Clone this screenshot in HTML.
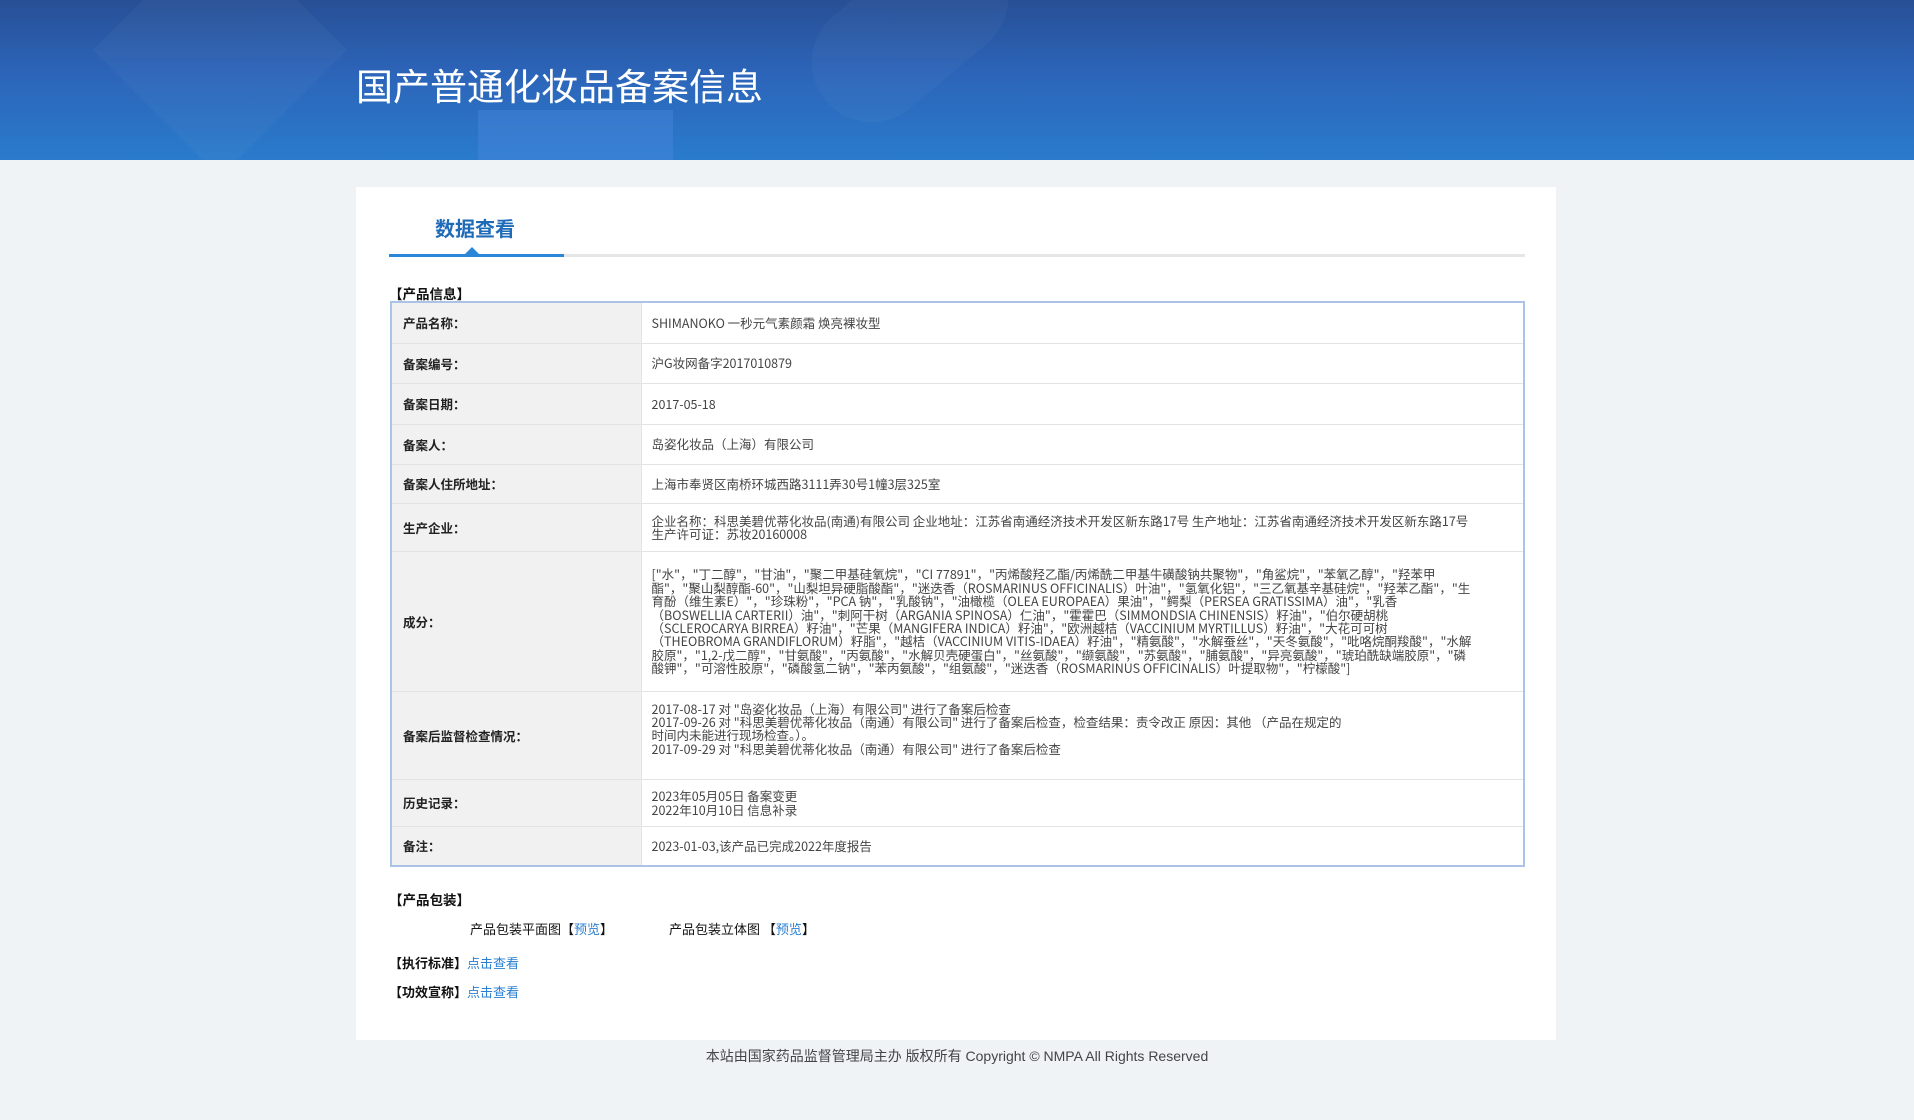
<!DOCTYPE html>
<html><head><meta charset="utf-8">
<style>
*{margin:0;padding:0;box-sizing:border-box}
body{width:1914px;height:1120px;background:#eff3f6;font-family:"Liberation Sans","Noto Sans CJK SC",sans-serif;position:relative;overflow:hidden;color:#333}
.hd{position:absolute;left:0;top:0;width:1914px;height:160px;background:linear-gradient(180deg,#274f95 0%,#2c64b8 45%,#2a7bcc 100%);overflow:hidden}
.hd .s1{position:absolute;left:130px;top:-40px;width:180px;height:180px;background:rgba(255,255,255,.03);transform:rotate(45deg)}
.hd .s2{position:absolute;left:478px;top:110px;width:195px;height:60px;background:rgba(80,140,230,.35)}
.hd .s3{position:absolute;left:800px;top:-30px;width:220px;height:120px;border-radius:60px;background:rgba(255,255,255,.03);transform:rotate(-40deg)}
.hd h1{position:absolute;left:356px;top:62px;font-size:37px;font-weight:normal;color:#fff;letter-spacing:0;line-height:44px;font-family:"Noto Sans CJK SC",sans-serif}
.panel{position:absolute;left:356px;top:187px;width:1200px;height:853px;background:#fff}
.tab{position:absolute;left:435px;top:213px;font-size:20px;font-weight:bold;color:#1f6bb8;font-family:"Noto Sans CJK SC",sans-serif}
.line{position:absolute;left:389px;top:254px;width:1136px;height:3px;background:#e6e6e6}
.line i{position:absolute;left:0;top:0;width:175px;height:3px;background:#2a86d6}
.tri{position:absolute;left:465px;top:247px;width:0;height:0;border-left:7px solid transparent;border-right:7px solid transparent;border-bottom:7px solid #2a86d6}
.sec{position:absolute;left:389px;font-size:13.5px;font-weight:bold;color:#111;font-family:"Noto Sans CJK SC",sans-serif}
table{position:absolute;left:390px;top:301px;width:1135px;border-collapse:collapse;border:2px solid #a9c4e6;font-size:12.5px;font-family:"Noto Sans CJK SC",sans-serif}
td{border-bottom:1px solid #e3e3e3;vertical-align:middle}
td.l{width:250px;background:#f1f1f1;padding-left:11px;font-weight:bold;color:#222;border-right:1px solid #e3e3e3}
td.v{padding:0 50px 0 10px;color:#444;line-height:13.4px}
.o{position:absolute;font-size:13px;color:#111;font-family:"Noto Sans CJK SC",sans-serif}
a{color:#2a7fd0;text-decoration:none}
.ft{position:absolute;left:0;width:1914px;top:1046px;text-align:center;font-size:14px;color:#444;font-family:"Liberation Sans","Noto Sans CJK SC",sans-serif}
</style></head><body>
<div class="hd"><div class="s1"></div><div class="s3"></div><div class="s2"></div><h1>国产普通化妆品备案信息</h1></div>
<div class="panel"></div>
<div class="tab">数据查看</div>
<div class="line"><i></i></div>
<div class="tri"></div>
<div class="sec" style="top:283px">【产品信息】</div>
<table>
<tr style="height:41px"><td class="l">产品名称：</td><td class="v">SHIMANOKO 一秒元气素颜霜 焕亮裸妆型</td></tr>
<tr style="height:40px"><td class="l">备案编号：</td><td class="v">沪G妆网备字2017010879</td></tr>
<tr style="height:41px"><td class="l">备案日期：</td><td class="v">2017-05-18</td></tr>
<tr style="height:40px"><td class="l">备案人：</td><td class="v">岛姿化妆品（上海）有限公司</td></tr>
<tr style="height:39px"><td class="l">备案人住所地址：</td><td class="v">上海市奉贤区南桥环城西路3111弄30号1幢3层325室</td></tr>
<tr style="height:48px"><td class="l">生产企业：</td><td class="v">企业名称：科思美碧优蒂化妆品(南通)有限公司 企业地址：江苏省南通经济技术开发区新东路17号 生产地址：江苏省南通经济技术开发区新东路17号 生产许可证：苏妆20160008</td></tr>
<tr style="height:140px"><td class="l">成分：</td><td class="v">["水"，"丁二醇"，"甘油"，"聚二甲基硅氧烷"，"CI 77891"，"丙烯酸羟乙酯/丙烯酰二甲基牛磺酸钠共聚物"，"角鲨烷"，"苯氧乙醇"，"羟苯甲酯"，"聚山梨醇酯-60"，"山梨坦异硬脂酸酯"，"迷迭香（ROSMARINUS OFFICINALIS）叶油"，"氢氧化铝"，"三乙氧基辛基硅烷"，"羟苯乙酯"，"生育酚（维生素E）"，"珍珠粉"，"PCA 钠"，"乳酸钠"，"油橄榄（OLEA EUROPAEA）果油"，"鳄梨（PERSEA GRATISSIMA）油"，"乳香（BOSWELLIA CARTERII）油"，"刺阿干树（ARGANIA SPINOSA）仁油"，"霍霍巴（SIMMONDSIA CHINENSIS）籽油"，"伯尔硬胡桃（SCLEROCARYA BIRREA）籽油"，"芒果（MANGIFERA INDICA）籽油"，"欧洲越桔（VACCINIUM MYRTILLUS）籽油"，"大花可可树（THEOBROMA GRANDIFLORUM）籽脂"，"越桔（VACCINIUM VITIS-IDAEA）籽油"，"精氨酸"，"水解蚕丝"，"天冬氨酸"，"吡咯烷酮羧酸"，"水解胶原"，"1,2-戊二醇"，"甘氨酸"，"丙氨酸"，"水解贝壳硬蛋白"，"丝氨酸"，"缬氨酸"，"苏氨酸"，"脯氨酸"，"异亮氨酸"，"琥珀酰缺端胶原"，"磷酸钾"，"可溶性胶原"，"磷酸氢二钠"，"苯丙氨酸"，"组氨酸"，"迷迭香（ROSMARINUS OFFICINALIS）叶提取物"，"柠檬酸"]</td></tr>
<tr style="height:88px"><td class="l">备案后监督检查情况：</td><td class="v" style="vertical-align:top;padding-top:10px;padding-right:180px">2017-08-17 对 "岛姿化妆品（上海）有限公司" 进行了备案后检查<br>2017-09-26 对 "科思美碧优蒂化妆品（南通）有限公司" 进行了备案后检查，检查结果：责令改正 原因：其他 （产品在规定的时间内未能进行现场检查。）。<br>2017-09-29 对 "科思美碧优蒂化妆品（南通）有限公司" 进行了备案后检查</td></tr>
<tr style="height:47px"><td class="l">历史记录：</td><td class="v">2023年05月05日 备案变更<br>2022年10月10日 信息补录</td></tr>
<tr style="height:40px"><td class="l">备注：</td><td class="v">2023-01-03,该产品已完成2022年度报告</td></tr>
</table>
<div class="sec" style="top:889px">【产品包装】</div>
<div class="o" style="left:470px;top:919px">产品包装平面图【<a>预览</a>】</div>
<div class="o" style="left:669px;top:919px">产品包装立体图 【<a>预览</a>】</div>
<div class="o" style="left:389px;top:953px;font-weight:bold">【执行标准】<a style="font-weight:normal">点击查看</a></div>
<div class="o" style="left:389px;top:982px;font-weight:bold">【功效宣称】<a style="font-weight:normal">点击查看</a></div>
<div class="ft">本站由国家药品监督管理局主办 版权所有 Copyright © NMPA All Rights Reserved</div>
</body></html>
